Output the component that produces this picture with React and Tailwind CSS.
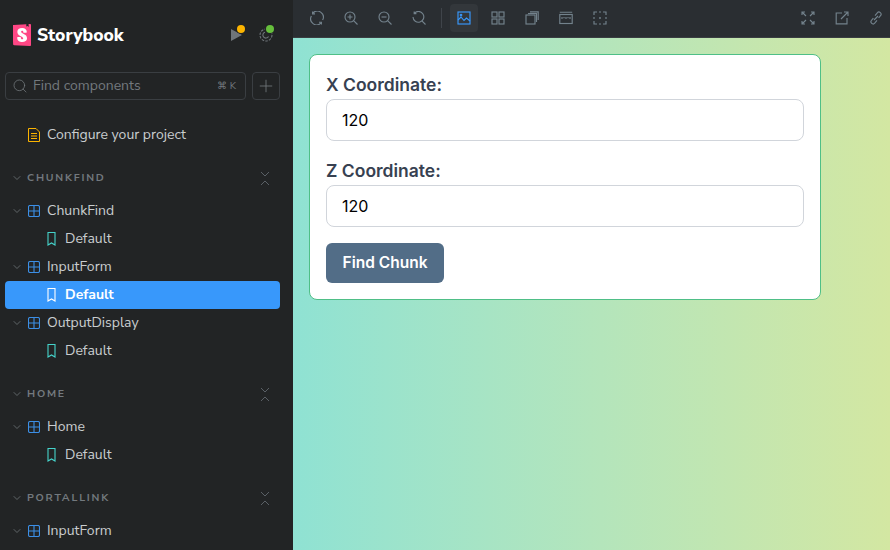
import React from "react";
import { ChevronDown, Search, Plus } from "lucide-react";

const sans = "font-['Nunito_Sans','Noto_Sans','Open_Sans',sans-serif]";

const Icon = ({ children, className = "text-[#73828c]" }) => (
  <svg width="14" height="14" viewBox="0 0 14 14" fill="none" stroke="currentColor" strokeWidth="1.15" className={className}>
    {children}
  </svg>
);

const Lens = ({ mark }) => (
  <>
    <circle cx="6" cy="6" r="5" />
    <path d="M9.600 9.600L13.500 13.500" />
    {mark}
  </>
);

const leftTools = [
  <path key="a" d="M3.200 1.800A6 6 0 0 1 12.600 9M10.800 12.200A6 6 0 0 1 1.400 5M2.600.4v2.400h2.400M11.400 13.600v-2.400H9" />,
  <Lens key="b" mark={<path d="M6 3.500v5M3.500 6h5" />} />,
  <Lens key="c" mark={<path d="M3.500 6h5" />} />,
  <path key="d" d="M2.400 2.200A5.400 5.400 0 1 1 1 6M2.200.4v2.200h2.200M9.900 9.900L13.500 13.500" />,
];

const viewTools = [
  <>
    <rect x="1" y="1" width="5" height="5" />
    <rect x="8" y="1" width="5" height="5" />
    <rect x="1" y="8" width="5" height="5" />
    <rect x="8" y="8" width="5" height="5" />
  </>,
  <>
    <rect x="1" y="4" width="9" height="9" />
    <path d="M3 2.500h8.500V11M5 .8h8.200V9" />
  </>,
  <>
    <rect x=".8" y="3.500" width="12.400" height="9" />
    <path d="M.8 1.200h12.400M3 6v2M5 6v1.200M7 6v2M9 6v1.200M11 6v2" />
  </>,
  <>
    <path d="M1 4V1h3M10 1h3v3M13 10v3h-3M4 13H1v-3M6 1h2M6 13h2M1 6v2M13 6v2" />
    <circle cx="7" cy="7" r=".4" />
  </>,
];

const rightTools = [
  <path key="x" d="M1.500 1.500l3.500 3.500M12.500 1.500L9 5M1.500 12.500L5 9M12.500 12.500L9 9M1 4V1h3M10 1h3v3M1 10v3h3M13 10v3h-3" />,
  <path key="o" d="M7 2H1.200v10.800H12V7M6 8l7-7M9 1h4v4" />,
  <path key="l" d="M6 4.600l2.300-2.800a2.100 2.100 0 0 1 3.200 2.800L9.600 7M8 9.400l-2.300 2.800a2.100 2.100 0 0 1-3.200-2.800L4.400 7M5 9l4-4" />,
];

const ToolButton = ({ children, active }) => (
  <div className={`flex h-7 w-7 items-center justify-center rounded ${active ? "bg-[#33373b]" : ""}`}>{children}</div>
);

const Chevron = ({ className = "text-[#73797e]" }) => <ChevronDown size={12} strokeWidth={1.5} className={className} />;

const ComponentIcon = () => (
  <svg width="12" height="12" viewBox="0 0 12 12" fill="none" stroke="#3c8fe6" strokeWidth="1.1" className="shrink-0">
    <rect x=".5" y=".5" width="11" height="11" rx="1.5" />
    <path d="M6 .5v11M.5 6h11" />
  </svg>
);

const BookmarkIcon = ({ color }) => (
  <svg width="9" height="14" viewBox="0 0 9 14" fill="none" stroke={color} strokeWidth="1.1" className="shrink-0">
    <path d="M1 .5h7v12.500L4.500 11 1 13z" />
  </svg>
);

const ComponentRow = ({ label }) => (
  <div className="flex h-7 items-center pl-[11px] text-sm text-[#c9cdcf]">
    <Chevron />
    <span className="ml-[5px]"><ComponentIcon /></span>
    <span className="ml-[7px]">{label}</span>
  </div>
);

const StoryRow = ({ active }) => (
  <div className={`mr-[13px] ml-[5px] flex h-7 items-center rounded pl-[42px] text-sm ${active ? "bg-[#3898fb] font-bold text-white" : "text-[#c9cdcf]"}`}>
    <BookmarkIcon color={active ? "#ffffff" : "#45d3cb"} />
    <span className="ml-[9px]">Default</span>
  </div>
);

const SectionHeader = ({ label }) => (
  <div className="mt-[17px] mb-[7px] flex h-6 items-center pl-[11px] pr-[23px]">
    <Chevron />
    <span className="ml-[4px] flex-1 text-[10.5px] font-bold tracking-[0.17em] text-[#73797e]">{label}</span>
    <svg width="10" height="15" viewBox="0 0 10 15" fill="none" stroke="#5a6066" strokeWidth="1">
      <path d="M1 1l4 4 4-4M1 14l4-4 4 4" />
    </svg>
  </div>
);

const Field = ({ label }) => (
  <div className="mb-4">
    <label className="block text-[17.5px] leading-7 font-semibold text-[#374151]">{label}</label>
    <input
      readOnly
      value="120"
      className="h-[42px] w-full rounded-lg border border-[#d1d5db] bg-white pl-[15px] text-base text-black outline-none"
    />
  </div>
);

export default function App() {
  return (
    <div className="flex h-[550px] w-[890px] overflow-hidden bg-[#222425]">
      <aside className={`flex w-[293px] shrink-0 flex-col overflow-hidden ${sans}`}>
        <div className="flex h-[72px] shrink-0 items-center pl-[13px] pb-[2px]">
          <svg width="18" height="22" viewBox="3 0 18.500 24" preserveAspectRatio="none">
            <rect x="6" y="3" width="12" height="18" fill="#fff" />
            <path
              fill="#ff4785"
              d="M16.710.243l-.12 2.710a.180.180 0 00.290.150l1.060-.800.900.700a.180.180 0 00.280-.140l-.100-2.760 1.330-.100a1.200 1.200 0 011.279 1.200v21.596a1.200 1.200 0 01-1.260 1.200l-16.096-.720a1.200 1.200 0 01-1.150-1.160l-.750-19.797a1.200 1.200 0 011.130-1.270L16.700.222zM13.640 9.300c0 .470 3.160.240 3.590-.080 0-3.200-1.720-4.890-4.859-4.890-3.150 0-4.899 1.720-4.899 4.290 0 4.450 5.999 4.530 5.999 6.959 0 .700-.320 1.100-1.050 1.100-.960 0-1.350-.490-1.300-2.160 0-.360-3.649-.480-3.769 0-.270 4.030 2.230 5.200 5.099 5.200 2.790 0 4.969-1.490 4.969-4.180 0-4.770-6.099-4.640-6.099-6.999 0-.970.720-1.100 1.130-1.100.450 0 1.250.070 1.190 1.870z"
            />
          </svg>
          <span className="ml-[6px] text-[17.5px] font-extrabold text-white">Storybook</span>
          <div className="ml-auto flex items-center gap-[15px] pr-[20px]">
            <div className="relative">
              <svg width="14" height="14" viewBox="0 0 14 14"><path d="M1 1L12 7 1 13z" fill="#6f757a" /></svg>
              <span className="absolute -top-[3px] -right-[1px] h-2 w-2 rounded-full bg-[#fcb400] ring-1 ring-[#222425]" />
            </div>
            <div className="relative">
              <svg width="14" height="14" viewBox="0 0 14 14" fill="none" stroke="#6f757a" strokeWidth="1.1">
                <circle cx="7" cy="7" r="6" strokeDasharray="2.500 1.200" />
                <path d="M9.500 8.500A3 3 0 1 1 6 4.200" />
              </svg>
              <span className="absolute -top-[3px] -right-[1px] h-2 w-2 rounded-full bg-[#66bf3c] ring-1 ring-[#222425]" />
            </div>
          </div>
        </div>

        <div className="flex shrink-0 gap-[6px] px-[5px] pr-[13px]">
          <div className="flex h-7 w-[241px] items-center rounded border border-[#3a3e42] pl-[6px] pr-[9px] text-[#73797e]">
            <Search size={16} strokeWidth={1.15} />
            <span className="ml-[5px] flex-1 text-sm">Find components</span>
            <span className="text-[10px]">⌘ K</span>
          </div>
          <div className="flex h-7 w-7 items-center justify-center rounded border border-[#3a3e42] text-[#73797e]">
            <Plus size={20} strokeWidth={1} />
          </div>
        </div>

        <div className="mt-[21px] flex h-7 shrink-0 items-center pl-[28px] text-sm text-[#c9cdcf]">
          <svg width="12" height="14" viewBox="0 0 12 14" fill="none" stroke="#fcb400" strokeWidth="1">
            <path d="M.5.500h7.500l3.500 3.500v9.500H.5zM3 5.500h6M3 8h6M3 10.500h6" />
          </svg>
          <span className="ml-[7px]">Configure your project</span>
        </div>

        <SectionHeader label="CHUNKFIND" />
        <ComponentRow label="ChunkFind" />
        <StoryRow />
        <ComponentRow label="InputForm" />
        <StoryRow active />
        <ComponentRow label="OutputDisplay" />
        <StoryRow />

        <SectionHeader label="HOME" />
        <ComponentRow label="Home" />
        <StoryRow />

        <SectionHeader label="PORTALLINK" />
        <ComponentRow label="InputForm" />
      </aside>

      <main className="flex min-w-0 flex-1 flex-col">
        <header className="flex h-[38px] shrink-0 items-start border-b border-[#3a3e42] bg-[#2a2e32] pt-1 pl-[10px]">
          <div className="flex items-center gap-[6px]">
            {leftTools.map((tool, i) => (
              <ToolButton key={i}><Icon>{tool}</Icon></ToolButton>
            ))}
          </div>
          <div className="mx-[8px] mt-1 h-5 w-px bg-[#3f444a]" />
          <div className="flex items-center gap-[6px]">
            <ToolButton active>
              <Icon className="text-[#3898fb]">
                <rect x="1" y="1" width="12" height="12" />
                <circle cx="4" cy="4" r=".8" />
                <path d="M1 9l3-3 3 3.500 2.500-2.500L13 10" />
              </Icon>
            </ToolButton>
            {viewTools.map((tool, i) => (
              <ToolButton key={i}><Icon>{tool}</Icon></ToolButton>
            ))}
          </div>
          <div className="ml-auto flex items-center gap-[6px]">
            {rightTools.map((tool, i) => (
              <ToolButton key={i}><Icon>{tool}</Icon></ToolButton>
            ))}
          </div>
        </header>

        <div className="flex-1 bg-gradient-to-r from-[#8fe2d3] to-[#d3e7a2] p-4 font-['Inter',sans-serif]">
          <div className="h-[246px] w-[512px] rounded-lg border border-[#4fbf87] bg-white p-4">
            <Field label="X Coordinate:" />
            <Field label="Z Coordinate:" />
            <button className="h-10 w-[118px] rounded-md bg-[#526d87] text-[15.5px] font-semibold text-white">Find Chunk</button>
          </div>
        </div>
      </main>
    </div>
  );
}
